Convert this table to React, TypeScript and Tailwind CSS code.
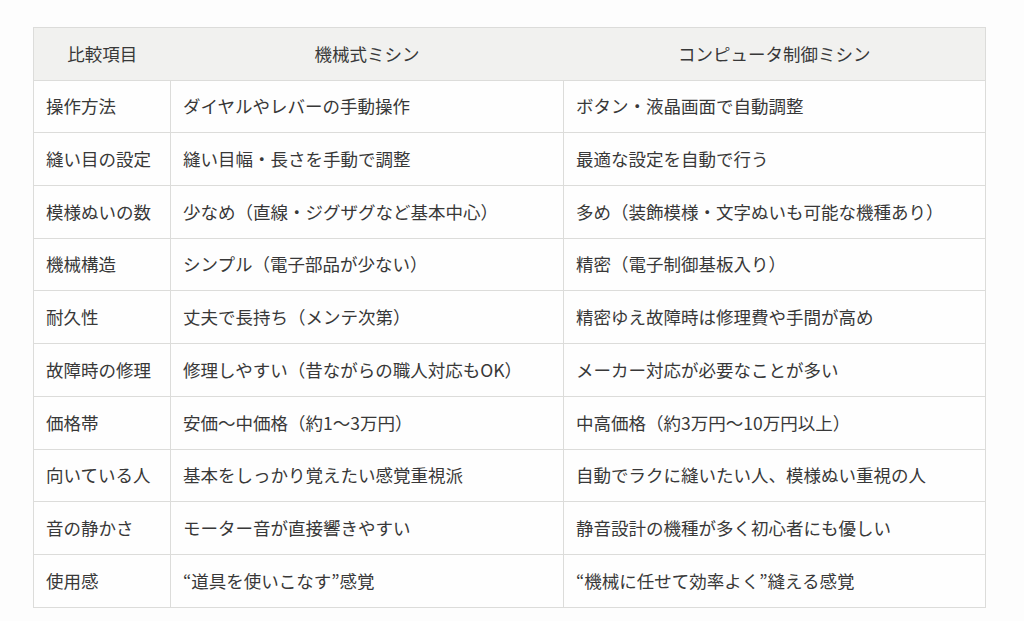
const rows = [
  ['操作方法', 'ダイヤルやレバーの手動操作', 'ボタン・液晶画面で自動調整'],
  ['縫い目の設定', '縫い目幅・長さを手動で調整', '最適な設定を自動で行う'],
  ['模様ぬいの数', '少なめ（直線・ジグザグなど基本中心）', '多め（装飾模様・文字ぬいも可能な機種あり）'],
  ['機械構造', 'シンプル（電子部品が少ない）', '精密（電子制御基板入り）'],
  ['耐久性', '丈夫で長持ち（メンテ次第）', '精密ゆえ故障時は修理費や手間が高め'],
  ['故障時の修理', '修理しやすい（昔ながらの職人対応もOK）', 'メーカー対応が必要なことが多い'],
  ['価格帯', '安価〜中価格（約1〜3万円）', '中高価格（約3万円〜10万円以上）'],
  ['向いている人', '基本をしっかり覚えたい感覚重視派', '自動でラクに縫いたい人、模様ぬい重視の人'],
  ['音の静かさ', 'モーター音が直接響きやすい', '静音設計の機種が多く初心者にも優しい'],
  ['使用感', '“道具を使いこなす”感覚', '“機械に任せて効率よく”縫える感覚'],
];

export default function App() {
  return (
    <div className="min-h-[621px] w-[1024px] bg-[#fdfdfd] pt-[27px] pl-[33px] font-['Noto_Sans_CJK_JP','Noto_Sans',sans-serif] text-[17.5px] text-[#383838]">
      <table className="w-[952px] table-fixed border-collapse border border-[#dcdcda]">
        <colgroup>
          <col className="w-[137px]" />
          <col className="w-[393px]" />
          <col className="w-[422px]" />
        </colgroup>
        <thead>
          <tr className="h-[52.7px] bg-[#f1f1ef]">
            <th className="border-b border-[#dcdcda] px-3 text-center font-normal">比較項目</th>
            <th className="border-b border-[#dcdcda] px-3 text-center font-normal">機械式ミシン</th>
            <th className="border-b border-[#dcdcda] px-3 text-center font-normal">コンピュータ制御ミシン</th>
          </tr>
        </thead>
        <tbody className="bg-[#fefefe]">
          {rows.map((r) => (
            <tr key={r[0]} className="h-[52.7px]">
              <td className="whitespace-nowrap border border-[#dcdcda] pl-3">{r[0]}</td>
              <td className="whitespace-nowrap border border-[#dcdcda] pl-3">{r[1]}</td>
              <td className="whitespace-nowrap border border-[#dcdcda] pl-3">{r[2]}</td>
            </tr>
          ))}
        </tbody>
      </table>
    </div>
  );
}
